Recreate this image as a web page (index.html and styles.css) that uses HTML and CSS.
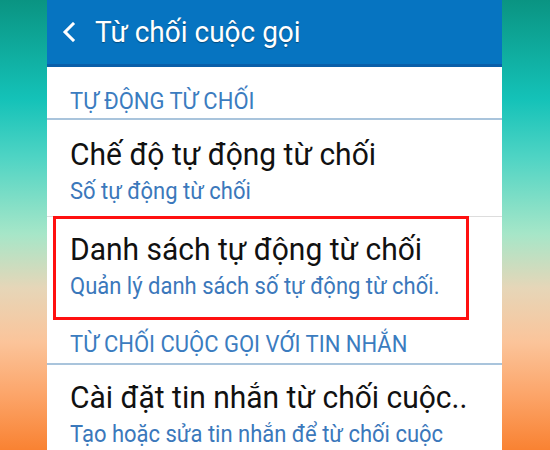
FILE: index.html
```html
<!DOCTYPE html>
<html>
<head>
<meta charset="utf-8">
<link rel="stylesheet" href="styles.css">
</head>
<body>
<div class="screen">
  <div class="appbar">
    <svg class="back" width="14" height="20" viewBox="0 0 14 20"><path d="M11 2 L3 10 L11 18" fill="none" stroke="#fff" stroke-width="3" stroke-linecap="square"/></svg>
    <span class="apptitle">Từ chối cuộc gọi</span>
  </div>
  <div class="section"><span class="sectext">TỰ ĐỘNG TỪ CHỐI</span></div>
  <div class="item first">
    <div class="title">Chế độ tự động từ chối</div>
    <div class="sub">Số tự động từ chối</div>
  </div>
  <div class="item second">
    <div class="title">Danh sách tự động từ chối</div>
    <div class="sub">Quản lý danh sách số tự động từ chối.</div>
    <div class="highlight"></div>
  </div>
  <div class="section section2"><span class="sectext">TỪ CHỐI CUỘC GỌI VỚI TIN NHẮN</span></div>
  <div class="item third">
    <div class="title">Cài đặt tin nhắn từ chối cuộc..</div>
    <div class="sub">Tạo hoặc sửa tin nhắn để từ chối cuộc</div>
  </div>
</div>
</body>
</html>
```
FILE: styles.css
```css
html, body {
  margin: 0;
  padding: 0;
  width: 550px;
  height: 450px;
  overflow: hidden;
}
body {
  background: linear-gradient(to bottom, #0a9482 0%, #14c2b8 22%, #4fd4c4 35%, #a6e6c8 52%, #e6d6b8 64%, #fbc49a 76%, #fca468 88%, #f98232 100%);
  font-family: Roboto, "Noto Sans", sans-serif;
}
.screen {
  margin-left: 47px;
  width: 455px;
  height: 450px;
  background: #ffffff;
  overflow: hidden;
}
.appbar {
  height: 64px;
  background: #0674c1;
  border-bottom: 3px solid #0a5fa9;
  display: flex;
  align-items: center;
  padding-left: 15px;
}
.back {
  display: block;
  margin-right: 19px;
}
.apptitle {
  color: #fff;
  font-size: 28px;
  text-shadow: 0 1px 1px rgba(0,0,0,0.35);
  display: inline-block;
  transform: scaleY(1.07);
  transform-origin: 0 26px;
}
.section {
  height: 53px;
  box-sizing: border-box;
  padding: 22px 0 0 23px;
  color: #3b7cbf;
  font-size: 22px;
  line-height: 26px;
  border-bottom: 2px solid #a9c4dc;
}
.sectext {
  display: block;
  white-space: nowrap;
  transform: scaleY(1.1);
  transform-origin: 0 20.5px;
}
.section2 {
  height: 45px;
  padding-top: 12px;
}
.item {
  position: relative;
  padding-left: 23px;
  box-sizing: border-box;
}
.first {
  height: 97px;
  padding-top: 16px;
  border-bottom: 1px solid #dddddd;
}
.second {
  height: 103px;
  padding-top: 14px;
}
.third {
  padding-top: 14px;
}
.title {
  color: #111;
  font-size: 30px;
  line-height: 38px;
  white-space: nowrap;
  transform: scaleY(1.07);
  transform-origin: 0 29px;
}
.sub {
  color: #3b78bb;
  font-size: 22px;
  line-height: 28px;
  margin-top: 4px;
  white-space: nowrap;
  transform: scaleY(1.06);
  transform-origin: 0 21.5px;
}
.highlight {
  position: absolute;
  left: 6px;
  top: -1px;
  width: 416px;
  height: 104px;
  box-sizing: border-box;
  border: 3px solid #ff1010;
}
```
